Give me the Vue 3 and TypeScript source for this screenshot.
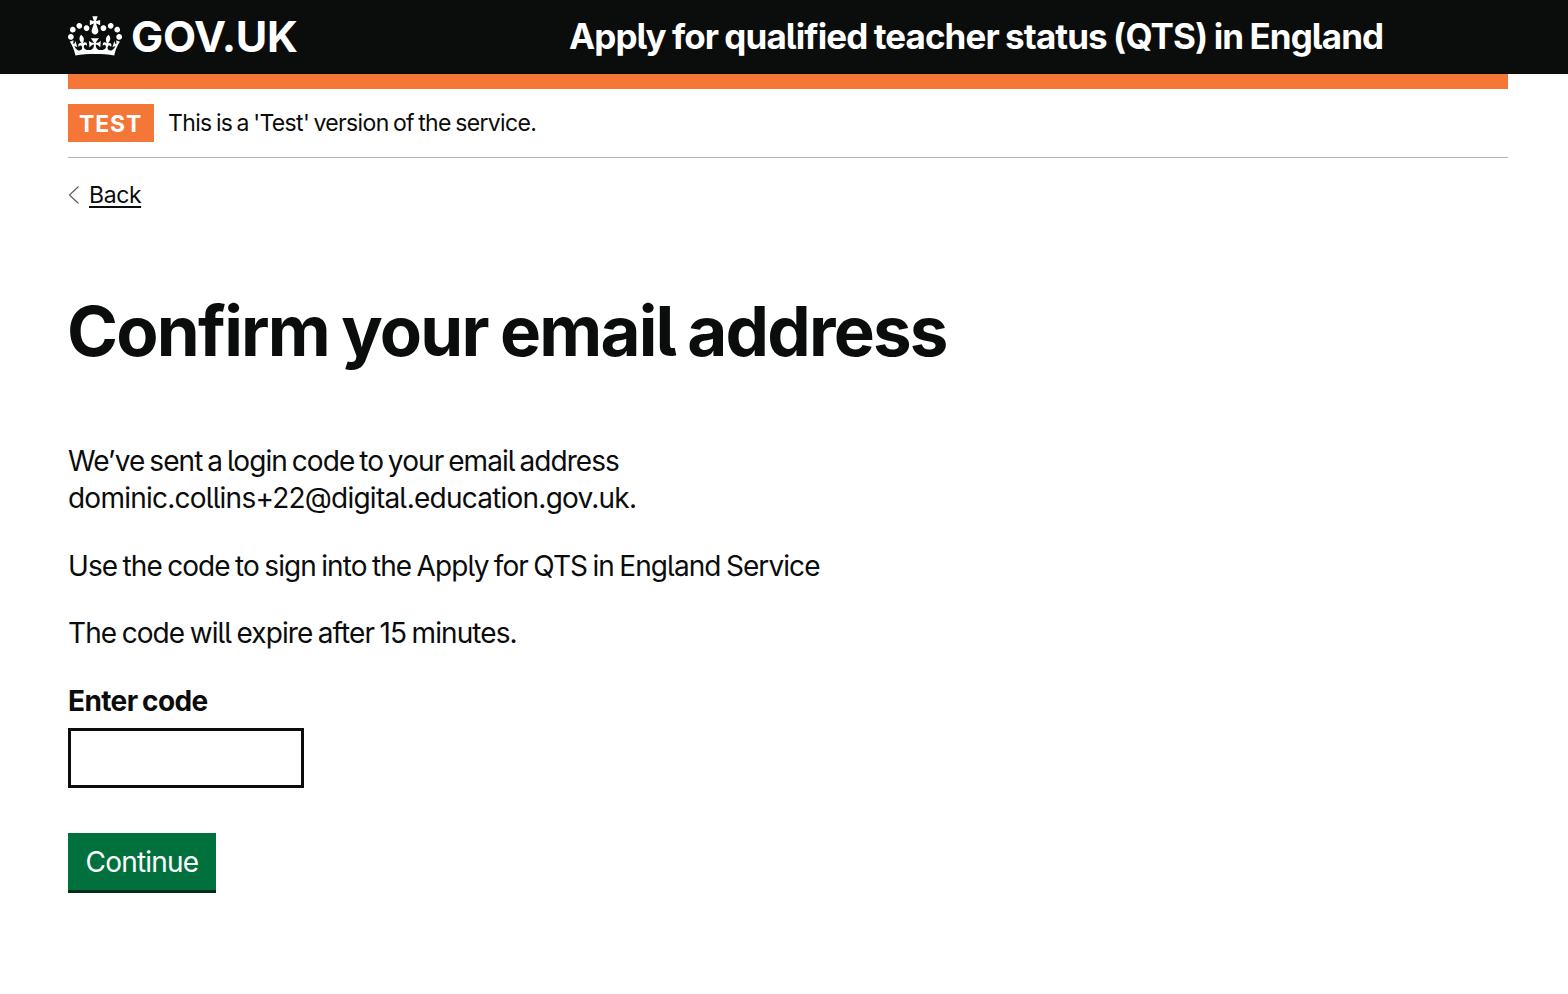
<script setup lang="ts">
import { ref } from 'vue'

const code = ref<string>('')
</script>

<template>
  <div class="page">
    <header class="header">
      <div class="container header-row">
        <a class="logo">
          <svg class="crown" viewBox="0 0 132 97" aria-hidden="true">
            <path fill="currentColor" fill-rule="evenodd" d="M25 30.2c3.5 1.5 7.7-.2 9.1-3.7 1.5-3.6-.2-7.8-3.9-9.2-3.6-1.4-7.6.3-9.1 3.9-1.4 3.5.3 7.5 3.9 9zM9 39.5c3.6 1.5 7.8-.2 9.2-3.7 1.5-3.6-.2-7.8-3.9-9.1-3.6-1.5-7.6.2-9.1 3.8-1.4 3.5.3 7.5 3.8 9zM4.4 57.2c3.5 1.5 7.7-.2 9.1-3.8 1.5-3.6-.2-7.7-3.9-9.1-3.5-1.5-7.6.3-9.1 3.8-1.4 3.5.3 7.6 3.9 9.1zm38.3-21.4c3.5 1.5 7.7-.2 9.1-3.8 1.5-3.6-.2-7.7-3.9-9.1-3.6-1.5-7.6.3-9.1 3.8-1.3 3.6.4 7.7 3.9 9.1zm64.4-5.6c-3.6 1.5-7.8-.2-9.1-3.7-1.5-3.6.2-7.8 3.8-9.2 3.6-1.4 7.7.3 9.2 3.9 1.3 3.5-.4 7.5-3.9 9zm15.9 9.3c-3.6 1.5-7.7-.2-9.1-3.7-1.5-3.6.2-7.8 3.7-9.1 3.6-1.5 7.7.2 9.2 3.8 1.5 3.5-.3 7.5-3.8 9zm4.7 17.7c-3.6 1.5-7.8-.2-9.2-3.8-1.5-3.6.2-7.7 3.9-9.1 3.6-1.5 7.7.3 9.2 3.8 1.3 3.5-.4 7.6-3.9 9.1zM89.3 35.8c-3.6 1.5-7.8-.2-9.2-3.8-1.4-3.6.2-7.7 3.9-9.1 3.6-1.5 7.7.3 9.2 3.8 1.4 3.6-.3 7.7-3.9 9.1zM69.7 17.7l8.9 4.7V9.3l-8.9 2.8c-.2-.3-.5-.6-.9-.9L72.4 0H59.6l3.5 11.2c-.3.3-.6.5-.9.9l-8.8-2.8v13.1l8.8-4.7c.3.3.6.7.9.9l-5 15.4v.1c-.2.8-.4 1.6-.4 2.4 0 4.1 3.1 7.5 7 8.1h.2c.3 0 .7.1 1 .1.4 0 .7 0 1-.1h.2c4-.6 7.1-4.1 7.1-8.1 0-.8-.1-1.7-.4-2.4V34l-5.1-15.4c.4-.2.7-.6 1-.9zM66 92.8c16.9 0 32.8 1.1 47.1 3.2 4-16.9 8.9-26.7 14-33.5l-9.6-3.4c1 4.9 1.1 7.2 0 10.2-1.5-1.4-3-4.3-4.2-8.7L108.6 76c2.8-2 5-3.2 7.5-3.3-4.4 9.4-10 11.9-13.6 11.2-4.3-.8-6.3-4.6-5.6-7.9 1-4.7 5.7-5.9 8-.5 4.3-8.7-3-11.4-7.6-8.8 7.1-7.2 7.9-13.5 2.1-21.1-8 6.1-8.1 12.3-4.5 20.8-4.7-5.4-12.1-2.5-9.5 6.2 3.4-5.2 7.9-2 7.2 3.1-.6 4.3-6.4 7.8-13.5 7.2-10.3-.9-10.9-8-11.2-13.8 2.5-.5 7.1 1.8 11 7.3L80.2 60c-4.1 4.4-8 5.3-12.3 5.4 1.4-4.4 8-11.6 8-11.6H55.5s6.4 7.2 7.9 11.6c-4.2-.1-8-1-12.3-5.4l1.4 16.4c3.9-5.5 8.5-7.7 10.9-7.3-.3 5.8-.9 12.8-11.1 13.8-7.2.6-12.9-2.9-13.5-7.2-.7-5 3.8-8.3 7.1-3.1 2.7-8.7-4.6-11.6-9.4-6.2 3.7-8.5 3.6-14.7-4.6-20.8-5.8 7.6-5 13.9 2.2 21.1-4.7-2.6-11.9.1-7.7 8.8 2.3-5.5 7.1-4.2 8.1.5.7 3.3-1.3 7.1-5.7 7.9-3.5.7-9-1.8-13.5-11.2 2.5.1 4.7 1.3 7.5 3.3l-4.7-15.4c-1.2 4.4-2.7 7.2-4.3 8.7-1.1-3-.9-5.3 0-10.2l-9.5 3.4c5 6.9 9.9 16.7 14 33.5 14.8-2.1 30.8-3.2 47.7-3.2z" />
          </svg>
          <span class="logo-text">GOV.UK</span>
        </a>
        <a class="service">Apply for qualified teacher status (QTS) in England</a>
      </div>
    </header>

    <div class="container">
      <div class="stripe"></div>
      <div class="phase">
        <strong class="tag">TEST</strong>
        <span class="phase-text">This is a 'Test' version of the service.</span>
      </div>
      <a class="back">
        <svg class="chevron" viewBox="0 0 12 20" aria-hidden="true">
          <path d="M10.5 1.5 1.5 10l9 8.5" fill="none" stroke="#505a5f" stroke-width="1.1" />
        </svg>
        <span class="back-text">Back</span>
      </a>

      <main class="main">
        <h1 class="title">Confirm your email address</h1>
        <p class="para">We’ve sent a login code to your email address<br /><span class="email">dominic.collins+22@digital.education.gov.uk.</span></p>
        <p class="para instruction">Use the code to sign into the Apply for QTS in England Service</p>
        <p class="para expiry">The code will expire after 15 minutes.</p>
        <label class="label" for="code">Enter code</label>
        <input id="code" v-model="code" class="input" type="text" />
        <button class="button" type="button">Continue</button>
      </main>
    </div>
  </div>
</template>

<style>
body {
  margin: 0;
  background: #fff;
}
</style>

<style scoped>
.page {
  height: 994px;
  overflow: hidden;
  color: #0b0c0c;
  font-family: Inter, "Liberation Sans", sans-serif;
  font-feature-settings: "cv05" 1;
  white-space: nowrap;
}
.container {
  width: 1440px;
  margin-left: 68px;
}
.header {
  background: #0b0c0c;
  color: #fff;
  height: 74px;
}
.header-row {
  display: flex;
  height: 74px;
}
.logo {
  display: flex;
  width: 501px;
}
.crown {
  width: 54px;
  height: 40px;
  margin-top: 16px;
}
.logo-text {
  margin-left: 9px;
  font-size: 43px;
  font-weight: 700;
  line-height: 72px;
  letter-spacing: -0.3px;
}
.service {
  font-size: 35px;
  font-weight: 700;
  line-height: 72px;
  letter-spacing: -0.9px;
  word-spacing: -1.1px;
}
.stripe {
  height: 15px;
  background: #f47738;
}
.phase {
  display: flex;
  align-items: center;
  height: 38px;
  padding: 15px 0;
  border-bottom: 1px solid #b1b4b6;
}
.tag {
  box-sizing: border-box;
  width: 86px;
  height: 38px;
  padding-left: 11px;
  background: #f47738;
  color: #fff;
  font-size: 23px;
  font-weight: 700;
  line-height: 40px;
  letter-spacing: 0.9px;
}
.phase-text {
  margin-left: 14px;
  font-size: 23px;
  line-height: 38px;
  letter-spacing: -0.65px;
  word-spacing: -1.5px;
}
.back {
  display: flex;
  align-items: center;
  height: 30px;
  margin-top: 22px;
  font-size: 23px;
  line-height: 30px;
}
.chevron {
  width: 12px;
  height: 20px;
  margin-right: 9px;
}
.back-text {
  letter-spacing: -0.4px;
  text-decoration: underline;
  text-decoration-thickness: 2px;
  text-underline-offset: 3px;
}
.main {
  display: flex;
  flex-direction: column;
  align-items: flex-start;
  padding-top: 81px;
}
.title {
  margin: 0 0 71.5px -1px;
  font-size: 69px;
  font-weight: 700;
  line-height: 80px;
  letter-spacing: -1.8px;
  word-spacing: -2.3px;
}
.para {
  margin: 0 0 30px;
  font-size: 28px;
  line-height: 37.5px;
  letter-spacing: -0.92px;
  word-spacing: -2.1px;
}
.email {
  letter-spacing: -0.77px;
}
.instruction {
  word-spacing: -1.6px;
}
.expiry {
  word-spacing: -1.5px;
}
.label {
  font-size: 28px;
  font-weight: 700;
  line-height: 37px;
  letter-spacing: -0.6px;
  word-spacing: -1.5px;
}
.input {
  box-sizing: border-box;
  width: 236px;
  height: 60px;
  margin: 8px 0 45px;
  border: 3px solid #0b0c0c;
  border-radius: 0;
  outline: 0;
  background: #fff;
}
.button {
  width: 148px;
  height: 60px;
  padding: 0;
  border: 0;
  background: #00703c;
  box-shadow: inset 0 -3px 0 #002d18;
  color: #fff;
  font: inherit;
  font-size: 28px;
  line-height: 59px;
  letter-spacing: -0.8px;
}
</style>
